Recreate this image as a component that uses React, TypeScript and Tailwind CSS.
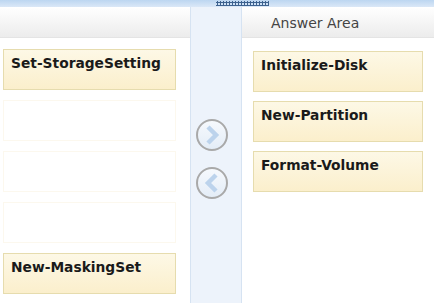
const leftSlots = ["Set-StorageSetting", "", "", "", "New-MaskingSet"];
const answers = ["Initialize-Disk", "New-Partition", "Format-Volume"];

function Card({ label }: { label: string }) {
  if (!label) {
    return <div className="h-[41px] border border-[#fcf8ee] bg-white" />;
  }
  return (
    <div className="h-[41px] border border-[#e6dcae] bg-gradient-to-b from-[#fdf8e6] to-[#fbefcc] px-[7px] pt-[5px] text-[13.8px] font-bold leading-[16px] text-[#1a1a1a]">
      {label}
    </div>
  );
}

function CircleArrow({ dir }: { dir: "right" | "left" }) {
  return (
    <div className="flex h-[32px] w-[32px] items-center justify-center rounded-full border-2 border-[#a9a9a9] bg-gradient-to-b from-[#f6f9fd] to-[#e4edf7]">
      <svg width="16" height="20" viewBox="0 0 16 20">
        <path
          d={dir === "right" ? "M4 2 L12 10 L4 18" : "M12 2 L4 10 L12 18"}
          fill="none"
          stroke="#bcd3ec"
          strokeWidth="4.5"
          strokeLinejoin="miter"
        />
      </svg>
    </div>
  );
}

export default function App() {
  return (
    <div className="flex h-[303px] w-[434px] flex-col overflow-hidden bg-white font-['DejaVu_Sans',Verdana,sans-serif]">
      <div className="flex h-[7px] shrink-0 justify-start bg-gradient-to-b from-[#bcd6f1] to-[#dbe8f7]">
        <div className="ml-[216px] mt-[1px] h-[5px] w-[53px] bg-[radial-gradient(circle,#3d628f_1px,transparent_1.2px)] bg-[length:3px_3px]" />
      </div>
      <div className="flex min-h-0 flex-1">
        <div className="flex w-[190px] flex-col">
          <div className="h-[31px] shrink-0 border-b border-[#e4e4e4] bg-gradient-to-b from-white to-[#ececec]" />
          <div className="flex flex-col gap-[10px] pl-[3px] pr-[14px] pt-[11px]">
            {leftSlots.map((s, i) => (
              <Card key={i} label={s} />
            ))}
          </div>
        </div>
        <div className="flex w-[52px] flex-col items-center gap-[16px] border-x border-[#d6e3f2] bg-[#edf3fb] pr-[8px] pt-[112px]">
          <CircleArrow dir="right" />
          <CircleArrow dir="left" />
        </div>
        <div className="flex flex-1 flex-col">
          <div className="flex h-[31px] shrink-0 items-center border-b border-[#e4e4e4] bg-gradient-to-b from-white to-[#ececec] pl-[29px] pt-[3px] text-[14px] text-[#444]">
            Answer Area
          </div>
          <div className="flex flex-col gap-[9px] pl-[11px] pr-[11px] pt-[13px]">
            {answers.map((a) => (
              <Card key={a} label={a} />
            ))}
          </div>
        </div>
      </div>
    </div>
  );
}
